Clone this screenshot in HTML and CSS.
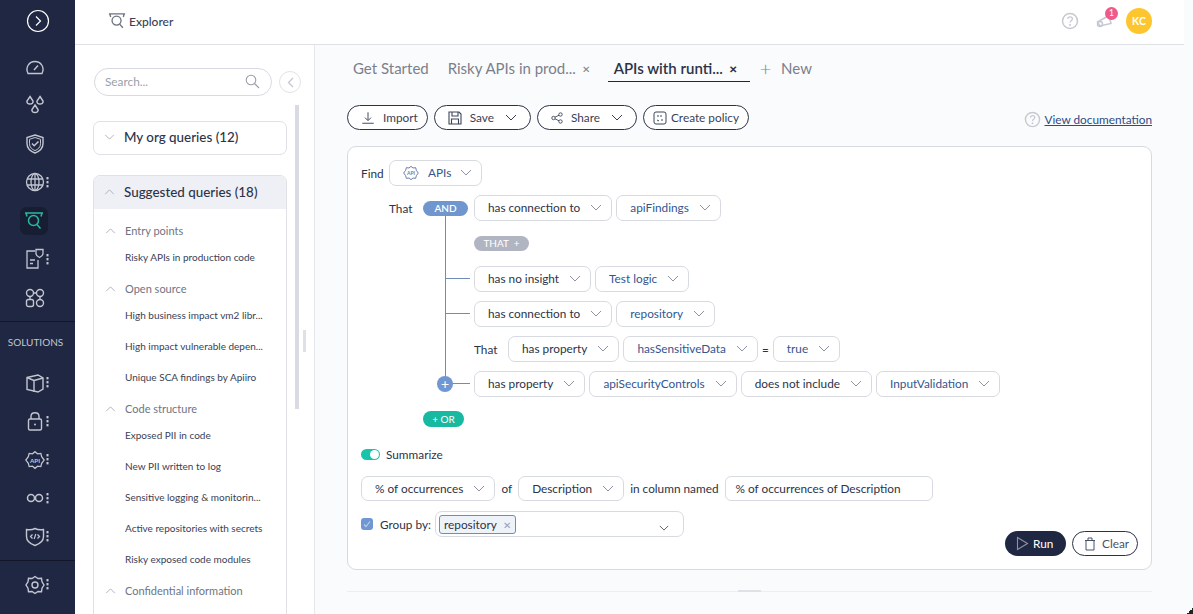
FILE: index.html
```html
<!DOCTYPE html>
<html lang="en">
<head>
    <meta charset="UTF-8">
    <title>Explorer</title>
    <link rel="stylesheet" href="styles.css">
</head>
<body>
    <svg class="defs" width="0" height="0">
        <symbol id="chev" viewBox="0 0 12 7"><path d="M1 1l5 5 5-5" fill="none" stroke="currentColor" stroke-width="1"/></symbol>
        <symbol id="chev-up" viewBox="0 0 12 7"><path d="M1 6l5-5 5 5" fill="none" stroke="currentColor" stroke-width="1"/></symbol>
        <symbol id="dots" viewBox="0 0 3 11"><g fill="currentColor"><rect x="0.5" y="0" width="2" height="2.4"/><rect x="0.5" y="4" width="2" height="2.4"/><rect x="0.5" y="8" width="2" height="2.4"/></g></symbol>
        <symbol id="explorer" viewBox="0 0 20 20"><g fill="none" stroke="currentColor" stroke-width="1.5"><path d="M1 2h18M2 2l1 3.5M18 2l-1 3.5"/><circle cx="9.5" cy="9.5" r="5"/><path d="M13 13.5l3.5 4"/></g></symbol>
        <symbol id="api" viewBox="0 0 24 24"><path d="M12 2l3 2.5 4-.5 1 4 3 4-3 4-1 4-4-.5-3 2.500-3-2.500-4 .5-1-4-3-4 3-4 1-4 4 .5z" fill="none" stroke="currentColor" stroke-width="1.5"/><text x="12" y="15" text-anchor="middle" class="api-text">API</text></symbol>
        <symbol id="question" viewBox="0 0 18 18"><circle cx="9" cy="9" r="7.5" fill="none" stroke="currentColor" stroke-width="1.5"/><path d="M6.800 7c.2-2.800 4.600-2.800 4.600 0 0 1.700-2.400 1.700-2.400 3.500" fill="none" stroke="currentColor" stroke-width="1.3"/><circle cx="9" cy="13" r="1" fill="currentColor"/></symbol>
    </svg>

    <nav class="rail">
        <div class="rail-top">
            <svg class="rail-toggle" width="24" height="24" viewBox="0 0 24 24"><circle cx="12" cy="12" r="10.5" fill="none" stroke="#fff" stroke-width="1.2"/><path d="M10 7.500l4.500 4.500-4.500 4.500" fill="none" stroke="#fff" stroke-width="1.2"/></svg>
        </div>
        <div class="rail-group">
            <div class="rail-item"><svg width="20" height="20" viewBox="0 0 20 20"><path d="M3 16.500h14c3-6-1-12-7-12s-10 6-7 12zM9 13l4-4.500" fill="none" stroke="currentColor" stroke-width="1.4"/></svg></div>
            <div class="rail-item"><svg width="20" height="20" viewBox="0 0 20 20"><g fill="none" stroke="currentColor" stroke-width="1.5"><path d="M5 1.500l3 4.500c.5 1.800-1 3-3 3S1.500 7.800 2 6zM15 1.500l3 4.500c.5 1.800-1 3-3 3s-3.500-1.200-3-3zM10 10l3 4.500c.5 1.800-1 3-3 3s-3.500-1.200-3-3z"/></g></svg></div>
            <div class="rail-item"><svg width="20" height="20" viewBox="0 0 20 20"><g fill="none" stroke="currentColor"><path d="M10 1l8 2.500v6c0 5-4 8-8 9.500-4-1.500-8-4.500-8-9.500v-6z" stroke-width="1.4"/><path d="M10 3.500l5.500 1.800v4.500c0 3.500-2.500 5.500-5.500 6.800-3-1.300-5.500-3.300-5.500-6.800V5.300z" stroke-width="1"/><path d="M7 9.500l2.200 2.200L13.500 7.500" stroke-width="1.5"/></g></svg></div>
            <div class="rail-item has-menu"><svg width="20" height="20" viewBox="0 0 20 20"><g fill="none" stroke="currentColor" stroke-width="1.3"><circle cx="10" cy="10" r="8.500"/><ellipse cx="10" cy="10" rx="4" ry="8.500"/><path d="M10 1.500v17M2 7h16M2 13h16"/></g></svg><svg class="rail-dots" width="3" height="11"><use href="#dots"/></svg></div>
            <div class="rail-item is-active"><svg width="20" height="20"><use href="#explorer"/></svg></div>
            <div class="rail-item has-menu"><svg width="20" height="22" viewBox="0 0 20 22"><g fill="none" stroke="currentColor" stroke-width="1.3"><path d="M10 3H2v17h11v-8M5 12h5M5 15.500h3"/><path d="M11 1.500h7v4c0 2-1.500 3-3.500 4-2-1-3.500-2-3.500-4z"/></g></svg><svg class="rail-dots" width="3" height="11"><use href="#dots"/></svg></div>
            <div class="rail-item"><svg width="20" height="20" viewBox="0 0 20 20"><g fill="none" stroke="currentColor" stroke-width="1.4"><circle cx="5" cy="5" r="3.500"/><circle cx="15" cy="5" r="3.500"/><rect x="1.500" y="11.500" width="7" height="7" rx="2"/><circle cx="15" cy="15" r="3.500"/><path d="M8.500 5h3M5 8.500v3M15 8.500v3"/></g></svg></div>
        </div>
        <div class="rail-label">SOLUTIONS</div>
        <div class="rail-group">
            <div class="rail-item has-menu"><svg width="20" height="20" viewBox="0 0 20 20"><g fill="none" stroke="currentColor" stroke-width="1.4"><path d="M2 4.500L13 2l5 3v11l-5 3-11-2.500z"/><path d="M2 4.500L9 7.500V19M9 7.500L18 5"/></g></svg><svg class="rail-dots" width="3" height="11"><use href="#dots"/></svg></div>
            <div class="rail-item has-menu"><svg width="20" height="20" viewBox="0 0 20 20"><g fill="none" stroke="currentColor" stroke-width="1.4"><rect x="3.500" y="8" width="13" height="11" rx="1.500"/><path d="M6 8V5.500c0-5 8-5 8 0V8"/></g><circle cx="10" cy="13.500" r="1" fill="currentColor"/></svg><svg class="rail-dots" width="3" height="11"><use href="#dots"/></svg></div>
            <div class="rail-item has-menu"><svg width="20" height="20"><use href="#api"/></svg><svg class="rail-dots" width="3" height="11"><use href="#dots"/></svg></div>
            <div class="rail-item has-menu"><svg width="18" height="18" viewBox="0 0 18 18"><g fill="none" stroke="currentColor" stroke-width="1.5"><circle cx="5" cy="9" r="3.500"/><circle cx="13" cy="9" r="3.500"/></g></svg><svg class="rail-dots" width="3" height="11"><use href="#dots"/></svg></div>
            <div class="rail-item has-menu"><svg width="20" height="20" viewBox="0 0 20 20"><g fill="none" stroke="currentColor"><path d="M10 1.500c3 1.500 5.500 1.500 8.500 1v7c0 4.500-4 7.500-8.500 9-4.500-1.500-8.500-4.500-8.500-9v-7c3 .5 5.500.5 8.500-1z" stroke-width="1.4"/><path d="M7.500 7.500L5.500 9.500l2 2M12.500 7.500l2 2-2 2M10.800 7l-1.600 5" stroke-width="1.2"/></g></svg><svg class="rail-dots" width="3" height="11"><use href="#dots"/></svg></div>
        </div>
        <div class="rail-bottom">
            <div class="rail-item has-menu"><svg width="20" height="20" viewBox="0 0 20 20"><g fill="none" stroke="currentColor" stroke-width="1.4"><path d="M10 1.500l3 2 3.500-.2.500 3.500 2 3.200-2 3.200-.5 3.500-3.500-.2-3 2-3-2-3.500.2-.5-3.500-2-3.200 2-3.200.5-3.500 3.500.2z"/><circle cx="10" cy="10" r="3"/></g></svg><svg class="rail-dots" width="3" height="11"><use href="#dots"/></svg></div>
        </div>
    </nav>

    <div class="page">
        <header class="topbar">
            <div class="brand"><svg width="18" height="18" class="brand-icon"><use href="#explorer"/></svg><span>Explorer</span></div>
            <div class="topbar-right">
                <svg class="help-icon" width="18" height="18"><use href="#question"/></svg>
                <div class="bell">
                    <svg width="18" height="16" viewBox="0 0 18 16"><g fill="none" stroke="#c6c9d2" stroke-width="1.5"><path d="M1.500 9L13 2.500l2 8L4 13z"/><circle cx="4" cy="11" r="2.500"/></g></svg>
                    <span class="bell-count">1</span>
                </div>
                <div class="avatar">KC</div>
            </div>
        </header>

        <div class="workspace">
            <aside class="sidebar">
                <div class="search-row">
                    <div class="search">
                        <span>Search...</span>
                        <svg width="15" height="15" viewBox="0 0 15 15"><g fill="none" stroke="#9a9eab" stroke-width="1.1"><circle cx="6" cy="6" r="4.800"/><path d="M9.500 9.500l4.500 4.500"/></g></svg>
                    </div>
                    <div class="collapse"><svg width="7" height="11" viewBox="0 0 7 11"><path d="M6 1L1.500 5.500 6 10" fill="none" stroke="#c4c7d0" stroke-width="1.3"/></svg></div>
                </div>
                <div class="scrollbar"></div>
                <div class="handle"></div>

                <div class="acc acc-closed">
                    <div class="acc-head"><svg width="11" height="6"><use href="#chev"/></svg><span>My org queries (12)</span></div>
                </div>
                <div class="acc">
                    <div class="acc-head is-open"><svg width="11" height="6"><use href="#chev-up"/></svg><span>Suggested queries (18)</span></div>
                    <div class="acc-body">
                        <div class="group"><svg width="11" height="6"><use href="#chev-up"/></svg><span>Entry points</span></div>
                        <div class="query">Risky APIs in production code</div>
                        <div class="group"><svg width="11" height="6"><use href="#chev-up"/></svg><span>Open source</span></div>
                        <div class="query">High business impact vm2 libr...</div>
                        <div class="query">High impact vulnerable depen...</div>
                        <div class="query">Unique SCA findings by Apiiro</div>
                        <div class="group"><svg width="11" height="6"><use href="#chev-up"/></svg><span>Code structure</span></div>
                        <div class="query">Exposed PII in code</div>
                        <div class="query">New PII written to log</div>
                        <div class="query">Sensitive logging &amp; monitorin...</div>
                        <div class="query">Active repositories with secrets</div>
                        <div class="query">Risky exposed code modules</div>
                        <div class="group"><svg width="11" height="6"><use href="#chev-up"/></svg><span>Confidential information</span></div>
                        <div class="query">Exposed secrets in code</div>
                    </div>
                </div>
            </aside>

            <main class="content">
                <div class="tabs">
                    <div class="tab">Get Started</div>
                    <div class="tab">Risky APIs in prod... <span class="tab-x">&#10005;</span></div>
                    <div class="tab is-current">APIs with runti... <span class="tab-x">&#10005;</span></div>
                    <div class="tab tab-new"><span class="plus">+</span> New</div>
                </div>

                <div class="toolbar">
                    <button class="pill"><svg width="14" height="16" viewBox="0 0 16 16"><path d="M8 1.500v9M4.500 7.500L8 11l3.500-3.500M1.500 14h13" fill="none" stroke="#3c4558" stroke-width="1.1"/></svg><span class="pill-gap">Import</span></button>
                    <button class="pill"><svg width="14" height="14" viewBox="0 0 14 14"><g fill="none" stroke="#3c4558" stroke-width="1.1"><path d="M1 1h10l2 2v10H1z"/><path d="M4 1v4h6V1M3.500 13V8h7v5"/></g></svg><span class="pill-gap">Save</span><svg class="pill-chev" width="12" height="7"><use href="#chev"/></svg></button>
                    <button class="pill"><svg width="12" height="12" viewBox="0 0 12 12"><g fill="none" stroke="#3c4558" stroke-width="0.9"><circle cx="2.500" cy="6" r="1.700"/><circle cx="9.500" cy="2.500" r="1.700"/><circle cx="9.500" cy="9.500" r="1.700"/><path d="M4 5.200l4-2M4 6.800l4 2"/></g></svg><span class="pill-gap">Share</span><svg class="pill-chev" width="12" height="7"><use href="#chev"/></svg></button>
                    <button class="pill pill-policy"><svg width="14" height="14" viewBox="0 0 14 14"><g fill="none" stroke="#3c4558" stroke-width="1"><rect x="1" y="1" width="12" height="12" rx="2"/><path d="M4 5h2M8 4v2M4 9l2 1M8 9h2"/></g></svg><span>Create policy</span></button>
                    <div class="doc-link">
                        <svg width="17" height="17"><use href="#question"/></svg>
                        <a href="#">View documentation</a>
                    </div>
                </div>

                <section class="panel">
                    <div class="find-row">
                        <span class="find-label">Find</span>
                        <div class="sel sel-find"><svg class="sel-icon" width="16" height="16"><use href="#api"/></svg><span class="val">APIs</span><svg width="12" height="7"><use href="#chev"/></svg></div>
                    </div>

                    <div class="tree">
                        <div class="tree-line"></div>
                        <div class="tree-head">
                            <span class="that">That</span>
                            <span class="badge badge-and">AND</span>
                            <div class="sel"><span>has connection to</span><svg width="12" height="7"><use href="#chev"/></svg></div>
                            <div class="sel"><span class="val">apiFindings</span><svg width="12" height="7"><use href="#chev"/></svg></div>
                        </div>
                        <div class="branches">
                            <span class="badge badge-that">THAT &nbsp;+</span>
                            <div class="branch has-tick">
                                <div class="sel"><span>has no insight</span><svg width="12" height="7"><use href="#chev"/></svg></div>
                                <div class="sel"><span class="val">Test logic</span><svg width="12" height="7"><use href="#chev"/></svg></div>
                            </div>
                            <div class="branch has-tick">
                                <div class="sel"><span>has connection to</span><svg width="12" height="7"><use href="#chev"/></svg></div>
                                <div class="sel"><span class="val">repository</span><svg width="12" height="7"><use href="#chev"/></svg></div>
                            </div>
                            <div class="branch">
                                <span class="that-inner">That</span>
                                <div class="sel"><span>has property</span><svg width="12" height="7"><use href="#chev"/></svg></div>
                                <div class="sel"><span class="val">hasSensitiveData</span><svg width="12" height="7"><use href="#chev"/></svg></div>
                                <span>=</span>
                                <div class="sel"><span class="val">true</span><svg width="12" height="7"><use href="#chev"/></svg></div>
                            </div>
                            <div class="branch has-tick">
                                <span class="add-dot">+</span>
                                <div class="sel"><span>has property</span><svg width="12" height="7"><use href="#chev"/></svg></div>
                                <div class="sel"><span class="val">apiSecurityControls</span><svg width="12" height="7"><use href="#chev"/></svg></div>
                                <div class="sel"><span>does not include</span><svg width="12" height="7"><use href="#chev"/></svg></div>
                                <div class="sel"><span class="val">InputValidation</span><svg width="12" height="7"><use href="#chev"/></svg></div>
                            </div>
                        </div>
                        <span class="badge badge-or">+ OR</span>
                    </div>

                    <div class="summary">
                        <div class="summary-toggle"><span class="toggle"></span><span>Summarize</span></div>
                        <div class="summary-row">
                            <div class="sel"><span>% of occurrences</span><svg width="12" height="7"><use href="#chev"/></svg></div>
                            <span>of</span>
                            <div class="sel"><span>Description</span><svg width="12" height="7"><use href="#chev"/></svg></div>
                            <span>in column named</span>
                            <div class="text-input">% of occurrences of Description</div>
                        </div>
                        <div class="group-row">
                            <div class="group-left">
                                <span class="check"><svg width="10" height="10" viewBox="0 0 10 10"><path d="M2 5.500l2 2 4-5" fill="none" stroke="#b9cbe8" stroke-width="1.2"/></svg></span>
                                <span class="group-label">Group by:</span>
                                <div class="multi">
                                    <span class="tag">repository <span class="tag-x">&#10005;</span></span>
                                    <svg class="multi-chev" width="10" height="6"><use href="#chev"/></svg>
                                </div>
                            </div>
                            <div class="actions">
                                <button class="run"><svg width="13" height="15" viewBox="0 0 13 15"><path d="M1.500 1.500v12l10-6z" fill="none" stroke="#8e93a3" stroke-width="1.1"/></svg>Run</button>
                                <button class="clear"><svg width="12" height="14" viewBox="0 0 12 14"><path d="M1 3.500h10M2 3.500v9.500h8V3.500M4 3.500V1h4v2.500" fill="none" stroke="#4a5264" stroke-width="1"/></svg>Clear</button>
                            </div>
                        </div>
                    </div>
                </section>

                <div class="bottom-rule"><span></span></div>
            </main>
        </div>
    </div>
    <div class="corner"></div>
</body>
</html>
```

FILE: styles.css
```css
* {
    box-sizing: border-box;
}
html, body {
    height: 100%;
}
body {
    margin: 0;
    display: flex;
    height: 614px;
    overflow: hidden;
    font-family: 'Lato', 'Open Sans', sans-serif;
    font-size: 11.8px;
    color: #2c3347;
    background-color: #fafbfc;
}
.defs {
    position: absolute;
}
.api-text {
    font-size: 7.5px;
    font-weight: 700;
    fill: currentColor;
}

/* left rail */
.rail {
    width: 75px;
    flex: none;
    background-color: #1f2742;
    color: #c3c6d0;
    display: flex;
    flex-direction: column;
}
.rail-top {
    height: 43px;
    display: flex;
    align-items: center;
    justify-content: center;
    padding-bottom: 1px;
}
.rail-group {
    display: flex;
    flex-direction: column;
    gap: 7.5px;
    padding-top: 8px;
}
.rail-item {
    width: 32px;
    height: 31px;
    margin-left: 19px;
    border-radius: 7px;
    display: flex;
    align-items: center;
    justify-content: center;
    position: relative;
}
.rail-dots {
    position: absolute;
    left: 27px;
    top: 10px;
}
.is-active {
    background-color: #171d33;
    color: #2bb8a0;
    width: 28px;
    height: 28px;
    margin-left: 20px;
    margin-top: 2px;
    margin-bottom: 1px;
}
.rail-label {
    margin-top: 8px;
    border-top: 1px solid #111729;
    padding: 14px 4px 0 0;
    height: 39px;
    font-size: 10px;
    text-align: center;
    color: #c3c6d0;
}
.rail-label + .rail-group {
    padding-top: 7px;
}
.rail-bottom {
    margin-top: 8px;
    border-top: 1px solid #111729;
    padding-top: 8px;
}

.page {
    flex: 1;
    min-width: 0;
    display: flex;
    flex-direction: column;
}
.topbar {
    height: 45px;
    flex: none;
    width: 1109px;
    background-color: #fff;
    border-bottom: 1px solid #dfe1e7;
    display: flex;
    align-items: center;
    justify-content: space-between;
    padding: 0 32px 2px 33px;
}
.brand {
    display: flex;
    align-items: center;
    gap: 3px;
    font-size: 12px;
    font-weight: 500;
    color: #3a4154;
}
.brand-icon {
    color: #6d7382;
}
.topbar-right {
    display: flex;
    align-items: center;
}
.help-icon {
    color: #c6c9d2;
    margin-right: 17px;
}
.bell {
    position: relative;
    width: 18px;
    height: 16px;
    margin-right: 12px;
}
.bell-count {
    position: absolute;
    left: 9px;
    top: -6px;
    width: 13px;
    height: 13px;
    border-radius: 50%;
    background-color: #ee5a8a;
    color: #fff;
    font-size: 8.5px;
    text-align: center;
    line-height: 13px;
}
.avatar {
    width: 26px;
    height: 26px;
    border-radius: 50%;
    background-color: #fdc62f;
    color: #fff;
    font-size: 10.5px;
    font-weight: 700;
    text-align: center;
    line-height: 26px;
}

.workspace {
    flex: 1;
    display: flex;
    min-height: 0;
}

/* query sidebar */
.sidebar {
    width: 240px;
    flex: none;
    background-color: #fff;
    border-right: 1px solid #e6e8ed;
    padding: 23px 27px 0 18px;
    position: relative;
    overflow: hidden;
}
.search-row {
    display: flex;
    align-items: center;
    margin-bottom: 25px;
}
.search {
    width: 178px;
    margin-left: 1px;
    height: 28px;
    border: 1px solid #d8dae1;
    border-radius: 15px;
    display: flex;
    align-items: center;
    justify-content: space-between;
    padding: 0 11px 2px 10px;
    color: #9a9eab;
    flex: none;
}
.collapse {
    width: 22px;
    height: 22px;
    flex: none;
    margin-left: 7px;
    border: 1px solid #e1e3e8;
    border-radius: 50%;
    display: flex;
    align-items: center;
    justify-content: center;
}
.scrollbar {
    position: absolute;
    left: 220px;
    top: 60px;
    width: 4px;
    height: 304px;
    background-color: #d9dbe3;
}
.handle {
    position: absolute;
    left: 228px;
    top: 285px;
    width: 3px;
    height: 22px;
    background-color: #dfe1e7;
}
.acc {
    border: 1px solid #dfe1e7;
    border-radius: 7px;
    width: 194px;
    overflow: hidden;
}
.acc-closed {
    margin-bottom: 20px;
}
.acc-closed .acc-head {
    height: 32px;
}
.acc-head {
    height: 33px;
    display: flex;
    align-items: center;
    gap: 9px;
    padding: 0 0 2px 10px;
    font-size: 13.4px;
    font-weight: 500;
    color: #2c3347;
}
.acc-head svg, .group svg {
    color: #a6a9b4;
    flex: none;
}
.acc-head.is-open {
    background-color: #eff0f5;
}
.acc-body {
    padding-top: 9px;
}
.group {
    height: 26px;
    display: flex;
    align-items: center;
    gap: 9px;
    padding: 0 0 1px 11px;
    font-size: 11px;
    color: #6f7483;
}
.query + .group {
    margin-top: 3.5px;
}
.group + .query + .group {
    margin-top: 6px;
}
.query {
    height: 31px;
    padding-left: 31px;
    line-height: 31px;
    font-size: 10px;
    color: #3a4154;
    white-space: nowrap;
}
.group + .query {
    height: 26px;
    line-height: 26px;
}
.group + .query + .query {
    margin-top: 2.5px;
}

/* main area */
.content {
    flex: 1;
    min-width: 0;
    padding: 0 41px 0 32px;
}
.tabs {
    height: 37px;
    display: flex;
    align-items: flex-end;
    gap: 19px;
    font-size: 15px;
    color: #7a7f8d;
    padding-left: 6px;
}
.tab {
    height: 28px;
    white-space: nowrap;
    line-height: 28px;
}
.tab-x {
    font-size: 10px;
    margin-left: 2px;
    vertical-align: 1px;
}
.is-current {
    color: #2c3347;
    font-weight: 600;
    border-bottom: 1px solid #1f2742;
    padding: 0 6px;
    margin-left: -1px;
    width: 142px;
}
.is-current .tab-x {
    font-weight: 700;
}
.tab-new {
    margin-left: -9px;
}
.plus {
    font-size: 20px;
    font-weight: 300;
    line-height: 20px;
    margin-right: 6px;
    vertical-align: -2px;
}
.toolbar {
    display: flex;
    align-items: center;
    gap: 6px;
    margin-top: 23px;
    margin-bottom: 16px;
    height: 25px;
}
.pill {
    height: 25px;
    border: 1px solid #2c3347;
    border-radius: 13px;
    background: #fff;
    display: flex;
    align-items: center;
    padding: 0 9px 0 13px;
    font-family: inherit;
    font-size: 11.8px;
    color: #3a4154;
}
.pill-gap {
    margin-left: 8px;
}
.pill-chev {
    margin: 0 4px 0 11px;
    color: #3a4154;
}
.pill-policy {
    padding: 0 9px;
    gap: 4px;
}
.doc-link {
    margin-left: auto;
    display: flex;
    align-items: center;
    gap: 3px;
    color: #c6c9d2;
    padding-top: 3px;
}
.doc-link a {
    color: #2f4b84;
    font-size: 11.8px;
}

.panel {
    height: 424px;
    background-color: #fff;
    border: 1px solid #d8dae1;
    border-radius: 9px;
    padding: 13px;
}
.find-row {
    display: flex;
    align-items: center;
}
.find-label {
    width: 28px;
}
.sel {
    height: 26px;
    flex: none;
    display: flex;
    align-items: center;
    gap: 10px;
    background: #fff;
    border: 1px solid #d8dae1;
    border-radius: 7px;
    padding: 0 9px 1px 13px;
    white-space: nowrap;
}
.sel svg {
    color: #8e93a3;
}
.sel-find {
    gap: 9px;
}
.sel .sel-icon {
    color: #6a7fa8;
}
.val {
    color: #33568f;
}
.tree {
    position: relative;
    margin-top: 9px;
    margin-left: 28px;
}
.tree-line {
    position: absolute;
    left: 56px;
    top: 18px;
    height: 168px;
    width: 1px;
    background-color: #6f8db8;
}
.tree-head {
    display: flex;
    align-items: center;
    gap: 4px;
}
.that {
    width: 30px;
}
.badge {
    display: inline-block;
    height: 15px;
    line-height: 15px;
    border-radius: 8px;
    color: #fff;
    font-size: 10px;
    text-align: center;
}
.badge-and {
    position: relative;
    width: 45px;
    margin-right: 2px;
    background-color: #6f96cf;
    font-weight: 600;
}
.badge-that {
    width: 55px;
    background-color: #b1b5c2;
    margin: 6px 0;
}
.badge-or {
    width: 41px;
    height: 16px;
    line-height: 16px;
    margin-left: 34px;
    margin-top: 14px;
    background-color: #17b9a1;
}
.branches {
    padding-left: 85px;
    display: flex;
    flex-direction: column;
    align-items: flex-start;
    gap: 9px;
    margin-top: 9px;
}
.branch {
    display: flex;
    align-items: center;
    gap: 4px;
    position: relative;
}
.branch.has-tick::before {
    content: "";
    position: absolute;
    left: -28px;
    width: 24px;
    top: 12px;
    height: 1px;
    background-color: #6f8db8;
}
.that-inner {
    width: 30px;
}
.add-dot {
    position: absolute;
    left: -37px;
    top: 5px;
    width: 16px;
    height: 16px;
    border-radius: 50%;
    background-color: #7097d2;
    color: #fff;
    font-size: 14px;
    line-height: 15px;
    text-align: center;
}
.summary {
    margin-top: 20px;
}
.summary-toggle {
    display: flex;
    align-items: center;
    gap: 6px;
}
.toggle {
    width: 19px;
    height: 11px;
    border-radius: 6px;
    background-color: #18c5aa;
    position: relative;
}
.toggle::after {
    content: "";
    position: absolute;
    right: 1px;
    top: 1px;
    width: 9px;
    height: 9px;
    border-radius: 50%;
    background-color: #fff;
}
.summary-row {
    display: flex;
    align-items: center;
    gap: 6px;
    margin-top: 14px;
}
.summary-row .sel {
    height: 25px;
}
.text-input {
    width: 208px;
    height: 25px;
    line-height: 23px;
    border: 1px solid #d8dae1;
    border-radius: 6px;
    padding-left: 10px;
}
.group-row {
    display: flex;
    justify-content: space-between;
    margin-top: 10px;
}
.group-left {
    display: flex;
    align-items: center;
    gap: 7px;
    height: 26px;
}
.group-label {
    width: 48px;
    white-space: nowrap;
}
.check {
    width: 12px;
    height: 12px;
    border-radius: 3px;
    background-color: #7097d2;
    display: flex;
    align-items: center;
    justify-content: center;
}
.multi {
    width: 249px;
    height: 26px;
    border: 1px solid #d8dae1;
    border-radius: 7px;
    padding: 3px 3px;
    position: relative;
}
.tag {
    display: inline-block;
    height: 19px;
    line-height: 17px;
    padding: 0 4px;
    border: 1px solid #6f8db8;
    border-radius: 3px;
    background-color: #eef3fa;
}
.tag-x {
    color: #9ba0ad;
    font-size: 10px;
    margin-left: 3px;
}
.multi-chev {
    position: absolute;
    right: 14px;
    top: 13px;
    color: #3a4154;
}
.actions {
    display: flex;
    gap: 6px;
    margin-top: 20px;
}
.run, .clear {
    height: 25px;
    border-radius: 13px;
    display: flex;
    align-items: center;
    font-family: inherit;
    font-size: 11.8px;
}
.run {
    width: 61px;
    gap: 4px;
    padding: 0 0 0 11px;
    background-color: #1f2742;
    color: #fff;
    border: none;
}
.clear {
    width: 66px;
    gap: 6px;
    padding: 0 0 0 11px;
    background-color: #fff;
    border: 1px solid #2c3347;
    color: #4a5264;
}
.bottom-rule {
    margin-top: 21px;
    border-top: 1px solid #eceef2;
    position: relative;
}
.bottom-rule span {
    position: absolute;
    left: 391px;
    top: -2px;
    width: 23px;
    height: 2px;
    background-color: #dfe1e7;
}
.corner {
    position: absolute;
    right: 0;
    bottom: 0;
    width: 6px;
    height: 6px;
    background: linear-gradient(135deg, transparent 50%, #222 50%);
}
```
